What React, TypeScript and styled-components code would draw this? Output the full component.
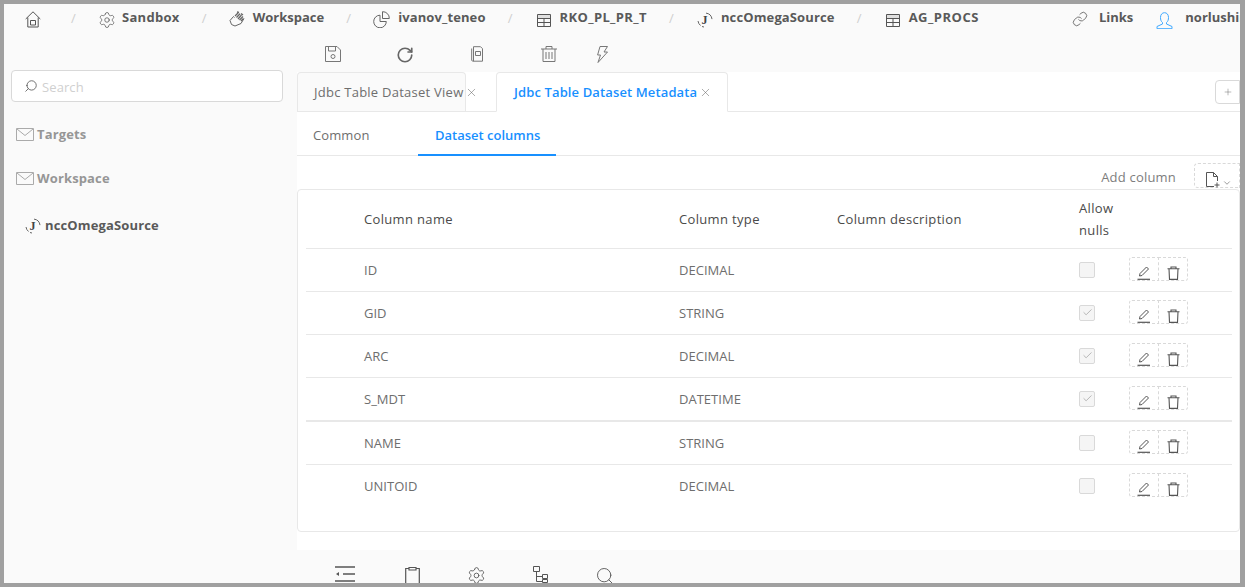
import React from "react";
import styled, { createGlobalStyle } from "styled-components";
import { Settings, RotateCw, Link as LinkIcon, Search, X, Plus, Check, ChevronDown } from "lucide-react";

const Global = createGlobalStyle`
  html, body { margin: 0; padding: 0; }
  body { font-family: "Open Sans", "Liberation Sans", sans-serif; font-size: 13px; color: #595959; }
`;

const Frame = styled.div`
  width: 1245px; height: 587px; box-sizing: border-box;
  border: solid #a0a0a0; border-width: 4px 5px 4px 4px;
  background: #fafafa; display: flex; flex-direction: column; overflow: hidden;
`;
const Header = styled.header`
  height: 36px; flex: none; display: flex; align-items: flex-start;
  padding: 7px 0 0 21px; box-sizing: border-box; white-space: nowrap;
`;
const Crumb = styled.span<{ $mr?: number; $ml?: number; $gap?: number; $ls?: number }>`
  display: inline-flex; align-items: flex-start; gap: ${p => p.$gap ?? 8}px; flex: none;
  font-weight: 700; font-size: 13px; line-height: 12px; color: #595959;
  letter-spacing: ${p => p.$ls ?? 0}px;
  margin-right: ${p => p.$mr ?? 0}px; margin-left: ${p => p.$ml ?? 0}px;
  svg { flex: none; }
`;
const Sep = styled.span`
  width: 49px; flex: none; text-align: center; color: #cfcfcf; font-size: 13px; line-height: 14px;
`;
const Body = styled.div`
  flex: 1; min-height: 0; display: flex;
`;
const Sidebar = styled.aside`
  width: 293px; flex: none; box-sizing: border-box; padding: 30px 14px 0 7px;
`;
const SearchBox = styled.label`
  height: 32px; box-sizing: border-box; border: 1px solid #d9d9d9; border-radius: 4px; background: #fff;
  display: flex; align-items: center; gap: 4px; padding: 0 0 0 12px;
`;
const SearchInput = styled.input`
  border: 0; outline: 0; background: transparent; flex: 1; min-width: 0; padding: 2px 0 0; font: 13px "Open Sans", sans-serif; color: #595959;
  letter-spacing: .1px;
  &::placeholder { color: #d0d0d0; opacity: 1; }
`;
const TreeGroup = styled.div<{ $top: number; $left?: number; $dark?: boolean }>`
  display: flex; align-items: center; gap: ${p => (p.$dark ? 4 : 3)}px;
  margin-top: ${p => p.$top}px; margin-left: ${p => p.$left ?? 5}px; height: 20px;
  font-weight: 700; color: ${p => (p.$dark ? "#595959" : "#969696")}; font-size: 13px; letter-spacing: .14px;
`;
const Right = styled.div`
  flex: 1; min-width: 0; display: flex; flex-direction: column;
`;
const Toolbar = styled.div`
  height: 32px; flex: none; display: flex; align-items: flex-start; padding: 6px 0 0 28px; box-sizing: border-box;
`;
const ToolSlot = styled.span<{ $w: number }>`
  width: ${p => p.$w}px; flex: none; display: block; color: #666; line-height: 0;
`;
const Content = styled.main`
  height: 478px; flex: none; background: #fff; display: flex; flex-direction: column; overflow: hidden;
`;
const TabBar = styled.div`
  height: 40px; flex: none; box-sizing: border-box; border-bottom: 1px solid #e8e8e8; display: flex; align-items: flex-end;
`;
const Tab = styled.div<{ $active?: boolean; $w: number; $ml?: number }>`
  width: ${p => p.$w}px; margin-left: ${p => p.$ml ?? 0}px; box-sizing: border-box;
  height: ${p => (p.$active ? 40 : 39)}px; margin-bottom: ${p => (p.$active ? -1 : 0)}px;
  background: ${p => (p.$active ? "#fff" : "#fafafa")};
  border: 1px solid #e8e8e8; border-bottom: ${p => (p.$active ? "1px solid #fff" : "0")};
  border-radius: 4px 4px 0 0; display: flex; align-items: center; gap: 2px; font-size: 13px;
  padding-left: ${p => (p.$active ? 17 : 16)}px;
  letter-spacing: ${p => (p.$active ? 0.12 : 0.25)}px;
  color: ${p => (p.$active ? "#1890ff" : "#6e6e6e")}; white-space: nowrap;
  font-weight: ${p => (p.$active ? 600 : 400)};
  svg { color: #666; flex: none; }
`;
const AddTab = styled.button`
  margin-left: auto; width: 25px; height: 24px; padding: 0; background: #fff; border: 1px solid #d9d9d9; border-radius: 4px 0 0 4px;
  color: #555; display: flex; align-items: center; justify-content: center; margin-bottom: 7px;
`;
const SubTabs = styled.div`
  height: 44px; flex: none; box-sizing: border-box; border-bottom: 1px solid #e8e8e8; display: flex; font-size: 13px;
`;
const SubTab = styled.div<{ $active?: boolean; $w: number; $pl: number }>`
  width: ${p => p.$w}px; padding: 4px 0 0 ${p => p.$pl}px; box-sizing: border-box; height: 44px;
  display: flex; align-items: center; white-space: nowrap; letter-spacing: ${p => (p.$active ? 0 : 0.1)}px;
  color: ${p => (p.$active ? "#1890ff" : "#6e6e6e")}; font-weight: ${p => (p.$active ? 600 : 400)};
  border-bottom: 2px solid ${p => (p.$active ? "#1890ff" : "transparent")};
`;
const ActionRow = styled.div`
  height: 33px; flex: none; display: flex; justify-content: flex-end; align-items: flex-start; padding-top: 7px; box-sizing: border-box;
`;
const ActionLabel = styled.span`
  color: #7d7d7d; font-size: 13px; margin: 5px 18px 0 0; letter-spacing: .2px;
`;
const DashedAdd = styled.button`
  width: 46px; height: 25px; padding: 8px 0 0 11px; box-sizing: border-box; background: #fff; border: 1px dashed #d9d9d9; border-radius: 4px 0 0 4px;
  display: flex; align-items: flex-start; color: #555;
`;
const Card = styled.section`
  height: 343px; flex: none; box-sizing: border-box; border: 1px solid #e8e8e8; border-radius: 4px; padding: 0 7px 0 8px;
`;
const Row = styled.div<{ $head?: boolean; $thick?: boolean }>`
  display: grid; grid-template-columns: 58px 315px 158px 242px 50px 59px; align-items: center;
  height: ${p => (p.$head ? 59 : p.$thick ? 44 : 43)}px; box-sizing: border-box;
  border-bottom: ${p => (p.$thick ? "2px" : "1px")} solid #e8e8e8;
  &:last-child { border-bottom: 0; padding-bottom: 1px; }
  color: ${p => (p.$head ? "#4a4a4a" : "#6e6e6e")};
  letter-spacing: ${p => (p.$head ? 0.34 : 0.02)}px;
  font-size: 13px;
`;
const Cell = styled.div<{ $col: number }>`
  grid-column: ${p => p.$col}; line-height: 22px;
`;
const NullBox = styled.span`
  width: 16px; height: 16px; box-sizing: border-box; display: flex; align-items: center; justify-content: center;
  border: 1px solid #d9d9d9; border-radius: 2px; background: #f5f5f5; color: #b0b0b0; margin-top: -1px;
`;
const Actions = styled.div`
  display: flex; height: 24px; margin-top: -2px;
`;
const ActionBtn = styled.button<{ $first?: boolean }>`
  width: 30px; height: 24px; padding: 8px 0 0; box-sizing: border-box; background: #fff;
  border: 1px dashed #d9d9d9; color: #555; display: flex; align-items: center; justify-content: center;
  border-radius: ${p => (p.$first ? "3px 0 0 3px" : "0 3px 3px 0")};
  margin-left: ${p => (p.$first ? 0 : -1)}px;
`;
const Footer = styled.footer`
  flex: 1; min-height: 0; overflow: hidden; display: flex; padding: 16px 0 0 38px; align-items: flex-start;
`;

const Home = () => (
  <svg width="16" height="17" viewBox="0 0 16 17" fill="none" stroke="#555" strokeWidth="1">
    <path d="M.7 8 8 .8 15.300 8M2.800 6.500v9.500h10.400V6.500M5.500 9.500h5v4.500h-5z" />
  </svg>
);
const Hand = () => (
  <svg width="17" height="16" viewBox="0 0 17 16" fill="none" stroke="#666" strokeWidth="1">
    <path d="M1 9.500 4.500 5.500l1 1M1 9.500l1.500 4 3.500 1.500 6-2.500 3-5" />
    <path d="M6 5 9 2M7.500 6.500 11 2.800M9 8l3.500-4M10.500 9 14 5.500M12 10l2.500-2.500M8 1l2 .5M12 2.500l2 1.500" strokeWidth="1.300" />
  </svg>
);
const Pie = () => (
  <svg width="17" height="17" viewBox="0 0 17 17" fill="none" stroke="#666" strokeWidth="1">
    <path d="M7 4.200A6.300 6.300 0 1 0 13.300 10.500H7zM9.500.7a6.500 6.500 0 0 1 6.800 6.800H9.500z" />
  </svg>
);
const TableIcon = () => (
  <svg width="16" height="15" viewBox="0 0 16 15" fill="none" stroke="#555" strokeWidth="1" style={{ marginTop: 2 }}>
    <path d="M1.500 1.500h13v12h-13zM1.500 5.500h13M1.500 9.500h13M8 5.500v8" />
    <path d="M1.500 3.500h13" strokeWidth="3" stroke="#777" opacity=".2" />
  </svg>
);
const JIcon = () => (
  <svg width="16" height="16" viewBox="0 0 16 16" fill="none" style={{ marginTop: 1 }}>
    <path d="M9 1.100a7 7 0 0 1 6 6M1 9a7 7 0 0 0 2.500 4.500M5 14.500l2 .5" stroke="#666" strokeWidth="1" />
    <text x="7.500" y="12" textAnchor="middle" fontFamily="Liberation Serif, serif" fontWeight="700" fontSize="12" fill="#444">J</text>
  </svg>
);
const Envelope = () => (
  <svg width="18" height="13" viewBox="0 0 18 13" fill="none" stroke="#aaa" strokeWidth="1">
    <path d="M.5.500h17v12H.5zM1 1l8 6.500L17 1" />
  </svg>
);
const UserIcon = () => (
  <svg width="17" height="17" viewBox="0 0 17 17" fill="none" stroke="#40a9ff" strokeWidth="1" style={{ marginTop: 1 }}>
    <path d="M6.500 10.500C5 9.500 4.500 7.500 4.500 5.500c0-3 1.700-4.800 4-4.800s4 1.800 4 4.800c0 2-.5 4-2 5v1.500l5.500 2.500v2.200H1v-2.200l5.500-2.500z" />
  </svg>
);
const Floppy = () => (
  <svg width="16" height="16" viewBox="0 0 16 16" fill="none" stroke="#777" strokeWidth="1">
    <path d="M.5.500h11.500l3.500 3.500v11.500H.5zM3.500.500v4.500h7V.500" />
    <circle cx="8" cy="10.500" r="2" />
  </svg>
);
const Doc = () => (
  <svg width="12" height="16" viewBox="0 0 12 16" fill="none" stroke="#777" strokeWidth="1">
    <path d="M2.500.700h7l2 2v12.500h-9zM.7 2.500v12l1.800 1M4.500 5.500h5v4h-5z" />
  </svg>
);
const BigTrash = () => (
  <svg width="16" height="16" viewBox="0 0 16 16" fill="none" stroke="#777" strokeWidth="1">
    <path d="M0 3h16M5 3V.5h6V3M2 3v12.500h12V3M5 6v7M8 6v7M11 6v7" />
  </svg>
);
const Bolt = () => (
  <svg width="11" height="17" viewBox="0 0 11 17" fill="none" stroke="#777" strokeWidth="1">
    <path d="M3 .5h7.500L7 6h3.500L1 16.500 3.500 9H.6z" />
  </svg>
);
const Pen = () => (
  <svg width="14" height="14" viewBox="0 0 14 14" fill="none" stroke="#555" strokeWidth="1">
    <path d="M2.500 10 3 7.500 9.500 1l2 2L5 9.500z" />
    <path d="M.5 13.300h12.500" strokeWidth="1.200" />
  </svg>
);
const SmallTrash = () => (
  <svg width="13" height="14" viewBox="0 0 13 14" fill="none" stroke="#555" strokeWidth="1.100">
    <path d="M.5 2.700h12M4 2.700V1h5v1.700M2 2.700l.5 10.700h8L11 2.700" />
  </svg>
);
const FileAdd = () => (
  <svg width="14" height="16" viewBox="0 0 14 16" fill="none" stroke="#555" strokeWidth="1">
    <path d="M8 14.500H.5V.5h7l4 4V9M7.500.5v4h4M11 10.500v5M8.500 13h5" />
  </svg>
);
const Outdent = () => (
  <svg width="20" height="17" viewBox="0 0 20 17" fill="none" stroke="#555" strokeWidth="1.600">
    <path d="M0 1h20M8 8h12M0 15h20" />
    <path d="M1 8l3-2v4z" fill="#555" stroke="none" />
  </svg>
);
const ClipboardIcon = () => (
  <svg width="15" height="18" viewBox="0 0 15 18" fill="none" stroke="#555" strokeWidth="1.200">
    <path d="M4 2.500H.7v15h13.600v-15H11M4 1.500h7v2.500H4z" />
  </svg>
);
const Tree = () => (
  <svg width="16" height="17" viewBox="0 0 16 17" fill="none" stroke="#555" strokeWidth="1">
    <path d="M.5.500h6v5h-6zM3.500 5.500V15.500h6M3.500 10.500h6M9.500 8.500h5v4h-5zM9.500 13.500h5v3h-5z" />
  </svg>
);

const rows = [
  { name: "ID", type: "DECIMAL", on: false },
  { name: "GID", type: "STRING", on: true },
  { name: "ARC", type: "DECIMAL", on: true },
  { name: "S_MDT", type: "DATETIME", on: true, thick: true },
  { name: "NAME", type: "STRING", on: false },
  { name: "UNITOID", type: "DECIMAL", on: false },
];

export default function App() {
  return (
    <Frame>
      <Global />
      <Header>
        <Crumb $mr={8}><Home /></Crumb>
        <Sep>/</Sep>
        <Crumb $gap={6} $ls={0.3}><Settings size={18} strokeWidth={1} color="#555" />Sandbox</Crumb>
        <Sep>/</Sep>
        <Crumb $gap={7}><Hand />Workspace</Crumb>
        <Sep>/</Sep>
        <Crumb $ls={0.1}><Pie />ivanov_teneo</Crumb>
        <Sep>/</Sep>
        <Crumb $ml={1} $ls={0.36}><TableIcon />RKO_PL_PR_T</Crumb>
        <Sep>/</Sep>
        <Crumb $ml={1} $ls={0.13}><JIcon />nccOmegaSource</Crumb>
        <Sep>/</Sep>
        <Crumb $ml={1} $ls={0.5}><TableIcon />AG_PROCS</Crumb>
        <Crumb $ml={93} $mr={23} $gap={11}><LinkIcon size={16} strokeWidth={1.2} color="#555" />Links</Crumb>
        <Crumb $gap={12}><UserIcon />norlushin</Crumb>
      </Header>
      <Body>
        <Sidebar>
          <SearchBox>
            <Search size={14} strokeWidth={1.4} color="#555" style={{ transform: "scaleX(-1)" }} />
            <SearchInput placeholder="Search" />
          </SearchBox>
          <TreeGroup $top={22}><Envelope />Targets</TreeGroup>
          <TreeGroup $top={24}><Envelope />Workspace</TreeGroup>
          <TreeGroup $top={27} $left={14} $dark><JIcon />nccOmegaSource</TreeGroup>
        </Sidebar>
        <Right>
          <Toolbar>
            <ToolSlot $w={71}><Floppy /></ToolSlot>
            <ToolSlot $w={75}><RotateCw size={18} strokeWidth={2.2} color="#666" /></ToolSlot>
            <ToolSlot $w={70}><Doc /></ToolSlot>
            <ToolSlot $w={56}><BigTrash /></ToolSlot>
            <ToolSlot $w={12}><Bolt /></ToolSlot>
          </Toolbar>
          <Content>
            <TabBar>
              <Tab $w={169}>Jdbc Table Dataset View<X size={13} strokeWidth={1} /></Tab>
              <Tab $active $w={232} $ml={30}>Jdbc Table Dataset Metadata<X size={13} strokeWidth={1} /></Tab>
              <AddTab><Plus size={10} strokeWidth={1} /></AddTab>
            </TabBar>
            <SubTabs>
              <SubTab $w={121} $pl={16}>Common</SubTab>
              <SubTab $active $w={138} $pl={17}>Dataset columns</SubTab>
            </SubTabs>
            <ActionRow>
              <ActionLabel>Add column</ActionLabel>
              <DashedAdd><FileAdd /><ChevronDown size={10} strokeWidth={1.4} style={{ marginTop: 6, marginLeft: 2 }} /></DashedAdd>
            </ActionRow>
            <Card>
              <Row $head>
                <Cell $col={2}>Column name</Cell>
                <Cell $col={3}>Column type</Cell>
                <Cell $col={4}>Column description</Cell>
                <Cell $col={5}>Allow<br />nulls</Cell>
              </Row>
              {rows.map(r => (
                <Row key={r.name} $thick={r.thick}>
                  <Cell $col={2}>{r.name}</Cell>
                  <Cell $col={3}>{r.type}</Cell>
                  <Cell $col={5}><NullBox>{r.on && <Check size={11} strokeWidth={2} />}</NullBox></Cell>
                  <Cell $col={6}>
                    <Actions>
                      <ActionBtn $first><Pen /></ActionBtn>
                      <ActionBtn><SmallTrash /></ActionBtn>
                    </Actions>
                  </Cell>
                </Row>
              ))}
            </Card>
          </Content>
          <Footer>
            <ToolSlot $w={70}><Outdent /></ToolSlot>
            <ToolSlot $w={62}><ClipboardIcon /></ToolSlot>
            <ToolSlot $w={66}><Settings size={19} strokeWidth={1.1} color="#555" /></ToolSlot>
            <ToolSlot $w={62}><Tree /></ToolSlot>
            <ToolSlot $w={20}><Search size={20} strokeWidth={1.1} color="#555" /></ToolSlot>
          </Footer>
        </Right>
      </Body>
    </Frame>
  );
}
